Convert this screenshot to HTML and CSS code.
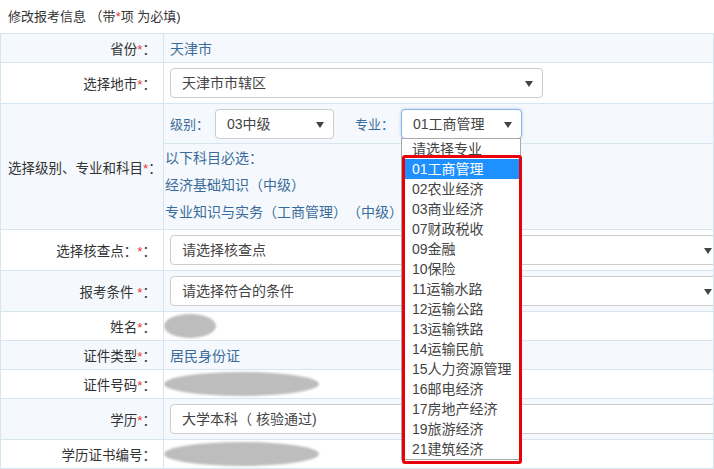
FILE: index.html
```html
<!DOCTYPE html>
<html lang="zh-CN">
<head>
    <meta charset="UTF-8">
    <title>修改报考信息</title>
    <link rel="stylesheet" href="styles.css">
</head>
<body>
    <div class="title">修改报考信息 （带<span class="req">*</span>项 为必填)</div>

    <table class="form">
        <tr class="row-sm stripe">
            <td class="label">省份<span class="req">*</span>：</td>
            <td class="value">天津市</td>
        </tr>
        <tr class="row-md">
            <td class="label">选择地市<span class="req">*</span>：</td>
            <td><div class="select city">天津市市辖区</div></td>
        </tr>
        <tr class="stripe">
            <td class="label">选择级别、专业和科目<span class="req">*</span>：</td>
            <td class="nopad">
                <div class="level-bar">
                    <span>级别：</span>
                    <div class="select level">03中级</div>
                    <span class="major-label">专业：</span>
                    <div class="select major focus">01工商管理</div>
                </div>
                <div class="subjects">
                    <div>以下科目必选：</div>
                    <div>经济基础知识（中级）</div>
                    <div>专业知识与实务（工商管理）（中级）</div>
                </div>
            </td>
        </tr>
        <tr class="row-md">
            <td class="label">选择核查点：<span class="req">*</span>：</td>
            <td><div class="select wide">请选择核查点</div></td>
        </tr>
        <tr class="row-md stripe">
            <td class="label">报考条件 <span class="req">*</span>：</td>
            <td><div class="select wide">请选择符合的条件</div></td>
        </tr>
        <tr class="row-sm">
            <td class="label">姓名<span class="req">*</span>：</td>
            <td class="nopad"><div class="blob short"></div></td>
        </tr>
        <tr class="row-sm stripe">
            <td class="label">证件类型<span class="req">*</span>：</td>
            <td class="value">居民身份证</td>
        </tr>
        <tr class="row-sm">
            <td class="label">证件号码<span class="req">*</span>：</td>
            <td class="nopad"><div class="blob long"></div></td>
        </tr>
        <tr class="row-md stripe">
            <td class="label">学历<span class="req">*</span>：</td>
            <td><div class="select edu">大学本科（ 核验通过)</div></td>
        </tr>
        <tr class="row-sm">
            <td class="label">学历证书编号：</td>
            <td class="nopad"><div class="blob long"></div></td>
        </tr>
    </table>

    <!-- open list of the 专业 select -->
    <ul class="options">
        <li>请选择专业</li>
        <li class="active">01工商管理</li>
        <li>02农业经济</li>
        <li>03商业经济</li>
        <li>07财政税收</li>
        <li>09金融</li>
        <li>10保险</li>
        <li>11运输水路</li>
        <li>12运输公路</li>
        <li>13运输铁路</li>
        <li>14运输民航</li>
        <li>15人力资源管理</li>
        <li>16邮电经济</li>
        <li>17房地产经济</li>
        <li>19旅游经济</li>
        <li>21建筑经济</li>
    </ul>
    <div class="mark"></div>
</body>
</html>
```

FILE: styles.css
```css
html, body {
    overflow: hidden;
}

body {
    position: relative;
    margin: 0;
    font-family: "Liberation Sans", "Noto Sans CJK SC", sans-serif;
    font-size: 13px;
    color: #333;
    background: #fff;
    text-spacing-trim: space-all;
}

.req {
    color: #e33;
}

.title {
    height: 33px;
    line-height: 33px;
    padding-left: 8px;
}

.form {
    width: 100%;
    border-collapse: collapse;
    table-layout: fixed;
}

.form td {
    border: 1px solid #d5e6f0;
    padding: 0 6px;
    white-space: nowrap;
    overflow: hidden;
}

.form td.label {
    width: 148px;
    padding: 0 7px 0 7px;
    text-align: right;
    font-size: 13.5px;
}

.form td.nopad {
    padding: 0;
}

.row-sm {
    height: 29px;
}

.row-md {
    height: 41px;
}

.stripe {
    background: #f5f9fd;
}

.value {
    color: #3a6c9b;
    font-size: 14px;
}

.select {
    position: relative;
    box-sizing: border-box;
    height: 30px;
    line-height: 28px;
    padding: 0 11px;
    border: 1px solid #ccc;
    border-radius: 4px;
    background: #fff;
    font-size: 14px;
    color: #444;
}

.select::after {
    content: "";
    position: absolute;
    right: 9px;
    top: 12px;
    border-left: 4px solid transparent;
    border-right: 4px solid transparent;
    border-top: 6px solid #444;
}

.city {
    width: 373px;
}

.wide {
    width: 552px;
}

.edu {
    width: 620px;
}

.edu::after {
    display: none;
}

.level-bar {
    display: flex;
    align-items: center;
    height: 39px;
    padding-left: 6px;
    border-bottom: 1px solid #d5e6f0;
    color: #3a6c9b;
}

.level {
    width: 119px;
    margin-left: 6px;
}

.major-label {
    margin-left: 21px;
}

.major {
    width: 121px;
    margin-left: 7px;
}

.focus {
    border-color: #8fb5de;
    box-shadow: 0 0 3px rgba(102, 150, 233, 0.5);
}

.subjects {
    padding: 1px 0 3px 1px;
    line-height: 27px;
    font-size: 14px;
    color: #3a6c9b;
    overflow: hidden;
}

.blob {
    height: 24px;
    border-radius: 50%;
    background: #bdbdbd;
    filter: blur(1px);
}

.short {
    width: 52px;
}

.long {
    width: 155px;
}

/* dropdown list over the page */
.options {
    position: absolute;
    left: 401px;
    top: 138px;
    width: 120px;
    margin: 0;
    padding: 0;
    list-style: none;
    background: #fff;
    border: 1px solid #a9a9a9;
    box-sizing: border-box;
    font-size: 14px;
    color: #444;
}

.options li {
    height: 20px;
    line-height: 20px;
    padding-left: 10px;
}

.options .active {
    background: #1e90ff;
    color: #fff;
}

.mark {
    position: absolute;
    left: 402px;
    top: 155px;
    width: 114px;
    height: 303px;
    border: 3px solid #e8000b;
    border-radius: 3px;
}
```
